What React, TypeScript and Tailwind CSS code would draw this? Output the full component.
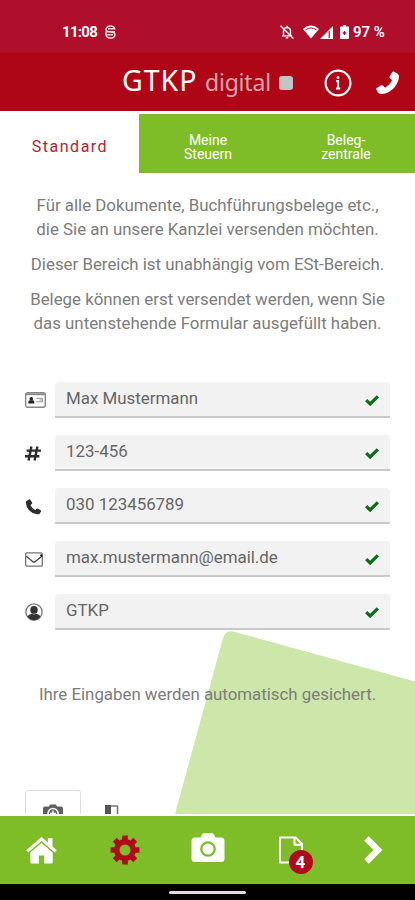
import type { ReactNode } from "react";

interface IField {
  icon: ReactNode;
  value: string;
}

const Handset = ({ className }: { className: string }) => (
  <svg viewBox="0 0 24 24" className={className} fill="currentColor">
    <path d="M2.2 2.6 5.3.7Q6.6.2 7.3 1.3L9.8 5.4Q10.4 6.6 9.4 7.4L7.9 8.5Q7.4 9.2 7.9 10.200 10 14 13.900 16.200 14.800 16.700 15.400 16L16.600 14.600Q17.400 13.800 18.400 14.300L22.700 16.900Q23.600 17.500 23.200 18.600L21.500 21.600Q20.400 23.200 17.800 23 10.500 22.400 5.500 17 .9 11.700.5 5.600.5 3.700 2.200 2.600Z" />
  </svg>
);

const Check = () => (
  <svg viewBox="0 0 14 11" className="mt-[2px] h-[11px] w-[14px]" fill="none" stroke="#0b6e14" strokeWidth="3.2">
    <path d="M1.2 5.2 5.2 9 12.9 1.4" />
  </svg>
);

const IdCard = () => (
  <svg viewBox="0 0 21 16" className="h-4 w-[21px]">
    <rect x="0.7" y="0.7" width="19.6" height="14.6" rx="2" fill="#fff" stroke="#888" strokeWidth="1.4" />
    <path d="M1 2.3h19" stroke="#888" strokeWidth="1.8" />
    <circle cx="6.3" cy="6.8" r="1.8" fill="#222" />
    <path d="M3.3 11.5V10q0-1.5 1.5-1.800h3q1.500.3 1.500 1.800v1.500z" fill="#222" />
    <path d="M11.200 6.300h6.300v3.500h-6.300M14.500 8h3" fill="none" stroke="#999" strokeWidth="1" />
  </svg>
);

const Hash = () => (
  <svg viewBox="0 0 16 15" className="h-[15px] w-4" fill="none" stroke="#2d2d2d" strokeWidth="2.4">
    <path d="M6.400.5 3.600 14.500M12.400.5 9.600 14.500M1.600 4.600H16M0 10.300h14.400" />
  </svg>
);

const Mail = () => (
  <svg viewBox="0 0 18 15" className="h-[15px] w-[18px]" fill="none" stroke="#777" strokeWidth="1.3">
    <rect x="0.7" y="0.9" width="16.6" height="13.2" rx="1.2" />
    <path d="M1.200 4.200 7.600 9.600q1.400 1 2.800 0L17 4" stroke="#444" />
    <path d="M15.600 2.500 17 4.500" stroke="#222" strokeWidth="2" />
  </svg>
);

const UserCircle = () => (
  <svg viewBox="0 0 18 18" className="h-[18px] w-[18px]">
    <circle cx="9" cy="9" r="8.1" fill="#fff" stroke="#777" strokeWidth="1.3" />
    <ellipse cx="9" cy="6.900" rx="3.7" ry="3.9" fill="#333" />
    <path d="M2.500 13.500Q3.500 11.200 7 10.800q2 1 4 0 3.500.4 4.500 2.700Q12.800 17.200 9 17.200T2.500 13.500z" fill="#333" />
  </svg>
);

const fields: IField[] = [
  { icon: <IdCard />, value: "Max Mustermann" },
  { icon: <Hash />, value: "123-456" },
  { icon: <Handset className="mt-px h-4 w-[17px] text-[#2d2d2d]" />, value: "030 123456789" },
  { icon: <Mail />, value: "max.mustermann@email.de" },
  { icon: <UserCircle />, value: "GTKP" },
];

const StatusBar = () => (
  <div className="flex h-[53px] items-end bg-[#af0f2b] pr-[29px] pb-[11px] pl-[62px] text-white">
    <span className="w-[43px] font-[Roboto] text-[15px] leading-5 font-bold tracking-[-0.7px]">11:08</span>
    <svg viewBox="0 0 11 14" className="mb-[3px] h-[14px] w-[11px]" fill="none" stroke="#f5d5dc" strokeWidth="1.5">
      <path d="M10 4.500Q9 .9 5.500.9T1 4.300Q1 7 5.500 7T10 9.800Q9.500 13.100 5.500 13.100T1 9.700M3 3.800h7M1 6.800h9M1 9.800h7M1 9.700V6.500" />
    </svg>
    <svg viewBox="0 0 14 14" className="mb-[3px] ml-auto h-[14px] w-[14px]" fill="none" stroke="#fff" strokeWidth="1.4">
      <path d="M3.500 10.700V6q0-3.200 3.500-3.500 3.500.3 3.500 3.500v4.700M2 10.900h10M7 .7v2M.6.8l12.800 12.700" />
      <path d="M5.700 12.800h2.600" />
    </svg>
    <svg viewBox="0 0 16 14" className="mb-[3px] ml-[9px] h-[14px] w-4">
      <path d="M0 4Q8-2.800 16 4L8 13.600z" fill="#fff" />
      <path d="M2.400 5Q8 .8 13.600 5" fill="none" stroke="#af0f2b" strokeWidth="1" />
    </svg>
    <svg viewBox="0 0 13 13" className="mb-[3px] ml-px h-[13px] w-[13px]">
      <path d="M13 0v13H0z" fill="#fff" />
      <path d="M9.200 5v7" stroke="#af0f2b" strokeWidth="1.2" />
    </svg>
    <svg viewBox="0 0 9 14" className="mb-[3px] ml-[7px] h-[14px] w-[9px]">
      <path d="M3 0h3v1.600h2q1 0 1 1V13q0 1-1 1H1q-1 0-1-1V2.600q0-1 1-1h2z" fill="#fff" />
      <path d="M4.500 6v4M2.700 8h3.600" stroke="#af0f2b" strokeWidth="1.3" />
    </svg>
    <span className="ml-1 w-[33px] font-[Roboto] text-[15px] leading-5 font-semibold whitespace-nowrap">97 %</span>
  </div>
);

const Header = () => (
  <header className="flex h-[58px] items-center bg-[#ae0617] pl-[122px] text-white">
    <h1 className="flex w-[164px] items-baseline pb-[3px] font-['Noto_Sans'] whitespace-nowrap">
      <span className="w-[83px] text-[28.5px] leading-10 tracking-[1px]">GTKP</span>
      <span className="w-[66px] text-[23px] leading-10 tracking-[-0.2px] text-[#d8a5aa]">digital</span>
    </h1>
    <div className="-ml-[7px] mt-[2px] h-[14px] w-[14px] rounded-[3px] bg-[#c3c3c6]"></div>
    <svg viewBox="0 0 28 28" className="mt-[2px] ml-[31px] h-7 w-7" fill="none" stroke="#fff" strokeWidth="2.2">
      <circle cx="14" cy="14" r="12.4" />
      <path d="M12.200 12h2v7.500M12 19.500h4.200" strokeWidth="1.8" />
      <circle cx="14" cy="8.7" r="1.4" fill="#fff" stroke="none" />
    </svg>
    <Handset className="mt-[2px] ml-[23px] h-6 w-[25px] -scale-x-100" />
  </header>
);

const Tabs = () => (
  <nav className="mt-[3px] flex h-[59px] text-center font-[Roboto]">
    <div className="flex w-[139px] items-center justify-center text-[16px] tracking-[1.5px] text-[#b31e30]">
      <span className="pt-[6px] pl-px">Standard</span>
    </div>
    <div className="flex flex-1 items-center justify-center bg-[#7fbd28] pt-[7px] text-[14px] leading-[14px] text-white">
      Meine
      <br />
      Steuern
    </div>
    <div className="flex flex-1 items-center justify-center bg-[#7fbd28] pt-[7px] text-[14px] leading-[14px] text-white">
      Beleg-
      <br />
      zentrale
    </div>
  </nav>
);

const Field = (props: IField) => (
  <div className="flex h-9 items-center pr-[25px] pl-[25px]">
    <div className="flex w-[30px] items-center">{props.icon}</div>
    <div className="flex h-9 flex-1 items-center justify-between rounded-t-[4px] border-b-2 border-[#c8caca] bg-[#f2f2f2] pr-[11px] pl-[11px] text-[16.9px] text-[#666]">
      <span>{props.value}</span>
      <Check />
    </div>
  </div>
);

const BottomBar = () => (
  <footer className="flex h-[68px] items-center bg-[#7fbd28] text-white">
    <div className="flex flex-1 justify-center">
      <svg viewBox="0 0 31 27" className="h-[27px] w-[31px]" fill="#fff">
        <path d="M15.500 0 .2 13.200l1.900 2.300L15.500 4.100l13.400 11.400 1.900-2.300-4.300-3.700V1.300h-4.600v4.300z" />
        <path d="M15.500 6 4.300 15.400V25q0 1.500 1.500 1.500h7v-8h5.400v8h7q1.500 0 1.500-1.500v-9.600z" />
      </svg>
    </div>
    <div className="flex flex-1 justify-center">
      <svg viewBox="0 0 30 30" className="h-[30px] w-[30px]" fill="none" stroke="#b20a1d">
        <circle cx="15" cy="15" r="8.2" strokeWidth="5.4" />
        <path d="M15 .6v5M15 24.400v5M.6 15h5M24.400 15h5M4.800 4.800l3.600 3.600M21.600 21.600l3.600 3.600M4.800 25.200l3.600-3.600M21.600 8.400l3.600-3.600" strokeWidth="5.6" />
      </svg>
    </div>
    <div className="flex flex-1 justify-center">
      <svg viewBox="0 0 34 30" className="mb-1 h-[30px] w-[34px]">
        <path d="M9.500 4.500 11.200 1Q11.800.3 13 .3h8q1.200 0 1.800.9l1.700 3.300H30q3.500 0 3.500 3.500v17.500q0 3.500-3.500 3.500H4Q.5 29 .5 25.500V8Q.5 4.500 4 4.500z" fill="#fff" />
        <circle cx="17" cy="16" r="6.7" fill="#fff" stroke="#7fbd28" strokeWidth="2.3" />
      </svg>
    </div>
    <div className="flex flex-1 justify-center">
      <div className="relative">
        <svg viewBox="0 0 24 28" className="h-7 w-6" fill="none" stroke="#fff" strokeWidth="2">
          <path d="M1 1.500h15.500L23 8v18.500H1zM15.500 1.500v7.200H23" strokeLinejoin="round" />
        </svg>
        <div className="absolute top-[14px] left-[10px] flex h-6 w-6 items-center justify-center rounded-full bg-[#b20a1d] font-[Roboto] text-[17px] leading-none font-bold">
          4
        </div>
      </div>
    </div>
    <div className="flex flex-1 justify-center">
      <svg viewBox="0 0 19 28" className="h-7 w-[19px]" fill="none" stroke="#fff" strokeWidth="6.2">
        <path d="M2.500 2.500 14 14 2.500 25.500" />
      </svg>
    </div>
  </footer>
);

export default function App() {
  return (
    <div className="flex h-[900px] w-[415px] flex-col overflow-hidden bg-white">
      <StatusBar />
      <Header />
      <Tabs />
      <main className="relative flex h-[641px] flex-col overflow-hidden font-[Roboto]">
        <svg viewBox="0 0 240 184" className="absolute right-0 bottom-0 h-[184px] w-[240px]" fill="#cde6a9">
          <path d="M0 184 48 8Q50.500 0 58 1.500L240 51.500V184z" />
        </svg>
        <div className="relative pt-[20px] text-center text-[16.85px] leading-6 whitespace-nowrap text-[#7c7c7c]">
          <p>
            Für alle Dokumente, Buchführungsbelege etc.,
            <br />
            die Sie an unsere Kanzlei versenden möchten.
          </p>
          <p className="mt-[11px]">Dieser Bereich ist unabhängig vom ESt-Bereich.</p>
          <p className="mt-[11px]">
            Belege können erst versendet werden, wenn Sie
            <br />
            das untenstehende Formular ausgefüllt haben.
          </p>
        </div>
        <div className="relative mt-[47px] flex flex-col gap-[17px]">
          {fields.map((field) => (
            <Field key={field.value} icon={field.icon} value={field.value} />
          ))}
        </div>
        <p className="relative mt-[52px] text-center text-[16.85px] leading-6 whitespace-nowrap text-[#7c7c7c]">
          Ihre Eingaben werden automatisch gesichert.
        </p>
        <div className="relative mt-[84px] ml-[25px] flex">
          <div className="flex h-14 w-14 justify-center rounded-[3px] border border-[#ddd] bg-white pt-[13px]">
            <svg viewBox="0 0 20 18" className="h-[18px] w-5">
              <path d="M6 2.500 7 .5h6l1 2h4q2 0 2 2V16q0 2-2 2H2q-2 0-2-2V4.500q0-2 2-2z" fill="#606060" />
              <circle cx="10" cy="9.5" r="5" fill="#606060" stroke="#fff" strokeWidth="1.5" />
              <path d="M10 6.500v6M7 9.500h6" stroke="#fff" strokeWidth="1.5" />
            </svg>
          </div>
          <svg viewBox="0 0 14 18" className="mt-[15px] ml-6 h-[18px] w-[14px]">
            <path d="M0 0h6v18H0z" fill="#555" />
            <path d="M6 1h6.500v16H6" fill="none" stroke="#777" strokeWidth="1.6" />
          </svg>
        </div>
      </main>
      <div className="h-[2px] shrink-0 bg-white"></div>
      <BottomBar />
      <div className="flex h-4 justify-center bg-black pt-[7px]">
        <div className="h-[3px] w-[77px] rounded-full bg-[#ddd]"></div>
      </div>
    </div>
  );
}
